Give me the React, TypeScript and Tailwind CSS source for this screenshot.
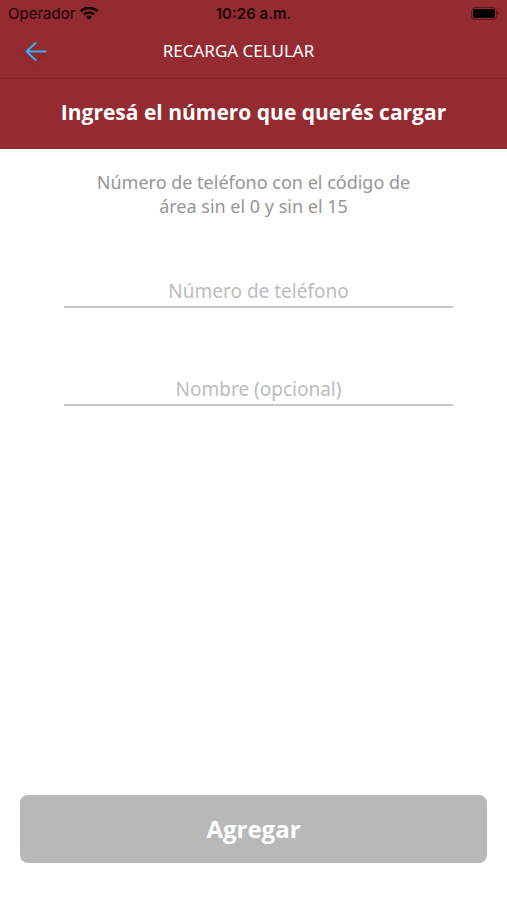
import { useState } from 'react'

function StatusBar() {
  return (
    <div className="relative flex h-7 items-center justify-between px-2 font-['Inter',sans-serif] text-[15px] text-[#180406]">
      <div className="flex items-center gap-1">
        <span>Operador</span>
        <svg width="20" height="14" viewBox="0 0 20 14" fill="none" stroke="currentColor" strokeWidth="2.6">
          <path d="M1.5 4.2a12.4 12.4 0 0 1 17 0" />
          <path d="M4.8 7.6a7.6 7.6 0 0 1 10.4 0" />
          <path d="M10 12.8 6.9 9.8a4.6 4.6 0 0 1 6.2 0z" fill="currentColor" stroke="none" />
        </svg>
      </div>
      <span className="absolute inset-x-0 text-center font-semibold">10:26 a.m.</span>
      <svg width="29" height="14" viewBox="0 0 29 14">
        <rect x="1.5" y="0.5" width="25" height="12" rx="3.5" fill="none" stroke="#5c1a1f" />
        <rect x="3" y="2" width="22" height="9" rx="2" fill="#000" />
        <path d="M27.4 4.5v4q1.6-.6 1.6-2t-1.6-2z" fill="#5c1a1f" />
      </svg>
    </div>
  )
}

export default function App() {
  const [phone, setPhone] = useState('')
  const [name, setName] = useState('')

  return (
    <div className="flex min-h-screen flex-col bg-white font-['Noto_Sans',sans-serif]">
      <header className="bg-[#942b31] text-white">
        <StatusBar />
        <div className="grid h-[51px] grid-cols-[72px_1fr_102px] items-center border-b border-[#86262c] pb-1">
          <button type="button" aria-label="Volver" className="flex justify-center text-[#3bb0ee]">
            <svg
              width="22"
              height="20"
              viewBox="0 0 22 20"
              fill="none"
              stroke="currentColor"
              strokeWidth="2"
              strokeLinecap="round"
              strokeLinejoin="round"
              className="drop-shadow-md"
            >
              <path d="M20.5 10.5H1.5M10.5 2 1.5 10.5l9 8.5" />
            </svg>
          </button>
          <h1 className="text-center text-[17px]">RECARGA CELULAR</h1>
        </div>
        <h2 className="flex h-[70px] items-center justify-center pb-0.5 text-center font-['Open_Sans',sans-serif] text-[21px] font-bold">
          Ingresá el número que querés cargar
        </h2>
      </header>
      <form className="flex flex-1 flex-col" onSubmit={(e) => e.preventDefault()}>
        <p className="mx-auto w-84 pt-[21px] text-center text-lg leading-6 text-[#969696]">
          Número de teléfono con el código de área sin el 0 y sin el 15
        </p>
        <div className="mt-[54px] mr-[54px] ml-16 flex flex-col gap-[62px]">
          <input
            type="tel"
            aria-label="Número de teléfono"
            placeholder="Número de teléfono"
            value={phone}
            onChange={(e) => setPhone(e.target.value)}
            className="h-9 border-b-2 border-[#c8c8c8] pt-1 text-center text-[19px] text-[#969696] placeholder:text-[#bcbcbc]"
          />
          <input
            type="text"
            aria-label="Nombre (opcional)"
            placeholder="Nombre (opcional)"
            value={name}
            onChange={(e) => setName(e.target.value)}
            className="h-9 border-b-2 border-[#c8c8c8] pt-1 text-center text-[19px] text-[#969696] placeholder:text-[#bcbcbc]"
          />
        </div>
        <button
          type="submit"
          className="mx-5 mt-auto mb-[37px] h-[68px] rounded-lg bg-[#b8b8b8] font-['Open_Sans',sans-serif] text-2xl font-bold text-white"
        >
          Agregar
        </button>
      </form>
    </div>
  )
}
